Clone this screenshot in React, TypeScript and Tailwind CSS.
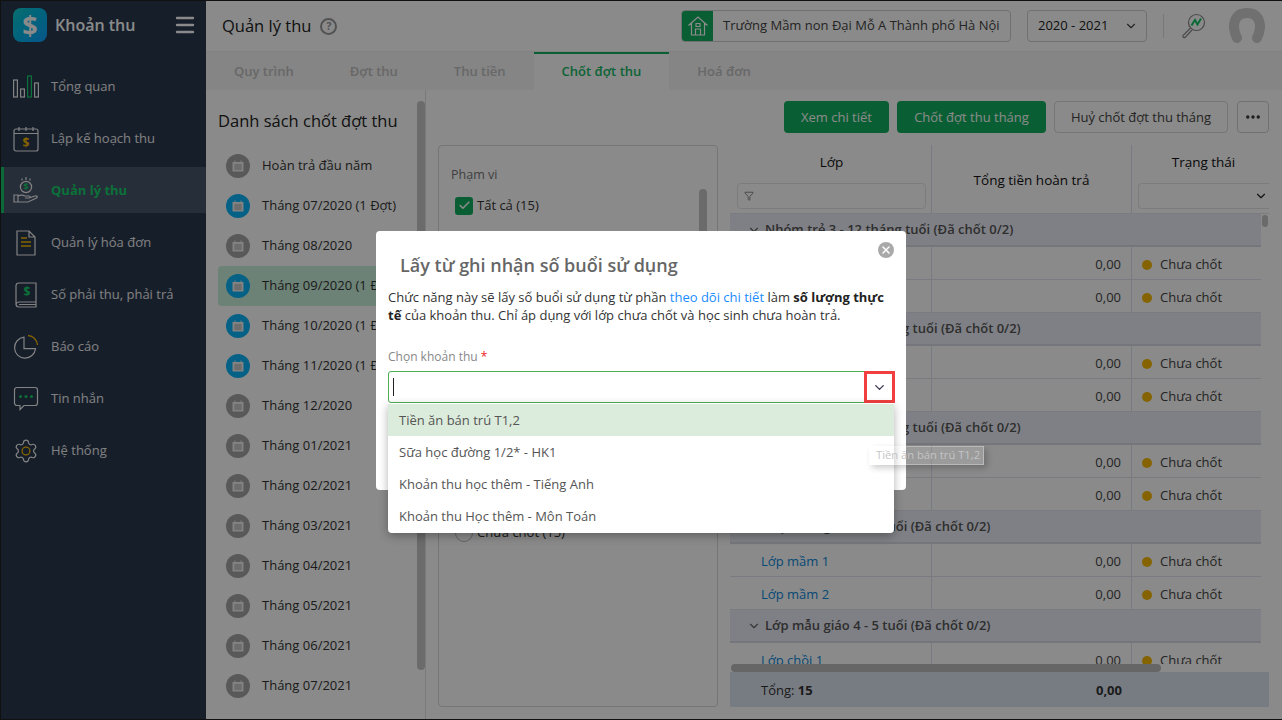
import * as React from 'react'
import { ChevronDown, Check, X, Menu, Ellipsis, Filter } from 'lucide-react'

const DollarText = ({ x, y, size, fill }: { x: number; y: number; size: number; fill: string }) => (
  <text x={x} y={y} fontSize={size} fontWeight={700} fontFamily="'Open Sans', sans-serif" textAnchor="middle" fill={fill}>
    $
  </text>
)

const stroke = { fill: 'none', stroke: '#f2f2f2', strokeWidth: 1.2 }

const IconChart = () => (
  <svg width="26" height="26" viewBox="0 0 26 26">
    <rect x="0.6" y="6" width="3.8" height="17" {...stroke} />
    <rect x="7.6" y="15" width="3.8" height="8" {...stroke} />
    <rect x="14.6" y="2" width="3.8" height="21" fill="none" stroke="#16d06a" strokeWidth="1.2" />
    <rect x="21.6" y="9" width="3.8" height="14" {...stroke} />
  </svg>
)

const IconPlan = () => (
  <svg width="26" height="26" viewBox="0 0 26 26">
    <rect x="1" y="3" width="24" height="22" rx="2" {...stroke} />
    <path d="M1 7.5h24M6 1v4M13 1v4M20 1v4" {...stroke} />
    <DollarText x={13} y={21} size={12} fill="#f5b800" />
  </svg>
)

const IconMoneyHand = () => (
  <svg width="26" height="28" viewBox="0 0 26 28">
    <path d="M13 0v3M9 1.500v2M17 1.500v2" {...stroke} />
    <circle cx="13" cy="10" r="5.600" {...stroke} />
    <DollarText x={13} y={13.400} size={9} fill="#16d06a" />
    <path d="M1 18h4v7H1zM5 19c3-1.500 5-1 7 0h4c1.500 0 1.500 2 0 2h-4M16 21l6-2c2-.5 3 1 1.500 2L15 25H5" {...stroke} />
  </svg>
)

const IconInvoice = () => (
  <svg width="26" height="26" viewBox="0 0 26 26">
    <path d="M4 1h12l6 6v18H4zM16 1v6h6" {...stroke} />
    <path d="M8 8h6M8 12h10M8 16h10" fill="none" stroke="#f5b800" strokeWidth="1.400" />
  </svg>
)

const IconBook = () => (
  <svg width="26" height="26" viewBox="0 0 26 26">
    <path d="M6 1h17v19H6c-3 0-3 2.500-3 2.500V4c0-2 1-3 3-3zM3 22c0 2 1 3 3 3h17v-2.500H6M23 20v2.500" {...stroke} />
    <DollarText x={14} y={14} size={12} fill="#16d06a" />
  </svg>
)

const IconPie = () => (
  <svg width="26" height="26" viewBox="0 0 26 26">
    <path d="M11 3.200a10.500 10.500 0 1 0 11.500 11.500H11z" {...stroke} />
    <path d="M15 1.500a10 10 0 0 1 9.500 9.500" fill="none" stroke="#f5b800" strokeWidth="1.300" />
  </svg>
)

const IconChat = () => (
  <svg width="26" height="26" viewBox="0 0 26 26">
    <path d="M4 1.500h18c1.500 0 2.500 1 2.500 2.500v13c0 1.500-1 2.500-2.500 2.500H11l-4 4v-4H4c-1.500 0-2.500-1-2.500-2.500V4c0-1.500 1-2.500 2.500-2.500z" {...stroke} />
    <circle cx="7.500" cy="10.500" r="1.500" fill="#16d06a" />
    <circle cx="13" cy="10.500" r="1.500" fill="#16d06a" />
    <circle cx="18.500" cy="10.500" r="1.500" fill="#16d06a" />
  </svg>
)

const IconGear = () => (
  <svg width="26" height="26" viewBox="0 0 24 24">
    <path
      d="M9.671 4.136a2.34 2.34 0 0 1 4.659 0 2.34 2.34 0 0 0 3.319 1.915 2.34 2.34 0 0 1 2.33 4.033 2.34 2.34 0 0 0 0 3.831 2.34 2.34 0 0 1-2.33 4.033 2.34 2.34 0 0 0-3.319 1.915 2.34 2.34 0 0 1-4.659 0 2.34 2.34 0 0 0-3.320-1.915 2.34 2.34 0 0 1-2.330-4.033 2.34 2.34 0 0 0 0-3.831A2.34 2.34 0 0 1 6.350 6.051a2.34 2.34 0 0 0 3.319-1.915"
      fill="none"
      stroke="#f2f2f2"
      strokeWidth="1.100"
    />
    <circle cx="12" cy="12" r="3.600" fill="none" stroke="#f5b800" strokeWidth="1.200" />
  </svg>
)

const navItems = [
  { label: 'Tổng quan', icon: <IconChart /> },
  { label: 'Lập kế hoạch thu', icon: <IconPlan /> },
  { label: 'Quản lý thu', icon: <IconMoneyHand />, active: true },
  { label: 'Quản lý hóa đơn', icon: <IconInvoice /> },
  { label: 'Số phải thu, phải trả', icon: <IconBook /> },
  { label: 'Báo cáo', icon: <IconPie /> },
  { label: 'Tin nhắn', icon: <IconChat /> },
  { label: 'Hệ thống', icon: <IconGear /> },
]

const Sidebar = () => (
  <aside className="flex w-[205px] shrink-0 flex-col bg-[#29384f]">
    <div className="flex h-[48px] items-center pl-3 pr-[9px]">
      <div className="flex h-[34px] w-[34px] items-center justify-center rounded-lg bg-gradient-to-br from-[#13cccc] to-[#139fff] text-[27px] font-bold text-white">
        $
      </div>
      <span className="ml-2 text-[16px] font-semibold text-white">Khoản thu</span>
      <Menu className="ml-auto text-white" size={24} strokeWidth={2.400} />
    </div>
    <nav className="mt-[14px] flex flex-col gap-[6px]">
      {navItems.map((item) => (
        <div
          key={item.label}
          className={
            item.active
              ? 'flex h-[46px] items-center border-l-[3px] border-[#16c567] bg-[#46556a] pl-[9px] pt-[2px]'
              : 'flex h-[46px] items-center pl-3 pt-[2px]'
          }
        >
          <span className="flex w-[26px] justify-center">{item.icon}</span>
          <span className={item.active ? 'ml-3 text-[13px] font-bold text-[#16d06a]' : 'ml-3 text-[13px] text-[#ededed]'}>
            {item.label}
          </span>
        </div>
      ))}
    </nav>
  </aside>
)

const Header = () => (
  <header className="flex h-[51px] shrink-0 items-center border-b border-[#eeeeee] bg-white pl-[16px] pr-[17px]">
    <h1 className="text-[16.500px] text-[#222]">Quản lý thu</h1>
    <span className="ml-[9px] flex h-[17px] w-[17px] items-center justify-center rounded-full border-2 border-[#999] text-[11px] font-bold text-[#999]">
      ?
    </span>
    <div className="ml-auto flex h-[32px] w-[330px] overflow-hidden rounded border border-[#d0d0d0]">
      <div className="flex w-[31px] items-center justify-center bg-[#12b05f]">
        <svg width="22" height="22" viewBox="0 0 22 22" fill="none" stroke="#ffffff" strokeWidth="1.200">
          <path d="M1.500 10.500 11 2l9.500 8.500M4.500 8.500V20h13V8.500M8.500 20v-6h5v6M9 8.500h4v3H9z" />
        </svg>
      </div>
      <div className="flex flex-1 items-center whitespace-nowrap pl-[10px] text-[13px] text-[#444]">
        Trường Mầm non Đại Mỗ A Thành phố Hà Nội
      </div>
    </div>
    <div className="ml-4 flex h-[32px] w-[120px] items-center justify-between rounded border border-[#d0d0d0] pl-[10px] pr-[8px] text-[13px] text-[#222]">
      2020 - 2021
      <ChevronDown size={14} strokeWidth={2} className="text-[#444]" />
    </div>
    <div className="ml-4 h-[24px] w-px bg-[#dddddd]" />
    <svg className="ml-4" width="26" height="26" viewBox="0 0 26 26" fill="none">
      <circle cx="16.500" cy="9.500" r="8" stroke="#8a8a8a" strokeWidth="1.200" />
      <path d="M10.500 15 3 22.500a1.500 1.500 0 0 0 2 2L12 17" stroke="#8a8a8a" strokeWidth="1.200" />
      <path d="M11.500 12.500 15 7l2.500 4.500L21 5.500" stroke="#16c567" strokeWidth="2" />
    </svg>
    <svg className="ml-[23px]" width="36" height="36" viewBox="0 0 36 36" fill="none">
      <path d="M8 30C2 18 5 5 18 5s16 13 10 25" stroke="#cfcfcf" strokeWidth="10" strokeLinecap="round" />
    </svg>
  </header>
)

const tabs = ['Quy trình', 'Đợt thu', 'Thu tiền', 'Chốt đợt thu', 'Hoá đơn']

const Tabs = () => (
  <div className="flex h-[38px] shrink-0 bg-[#f5f5f5] text-[13px] font-semibold">
    {tabs.map((tab) => (
      <div
        key={tab}
        className={
          tab === 'Chốt đợt thu'
            ? 'flex items-center border-t-2 border-[#12b05f] bg-white px-7 text-[#16b866]'
            : 'flex items-center px-7 pt-[2px] text-[#c0c0c0]'
        }
      >
        {tab}
      </div>
    ))}
  </div>
)

const periods = [
  { label: 'Hoàn trả đầu năm' },
  { label: 'Tháng 07/2020 (1 Đợt)', blue: true },
  { label: 'Tháng 08/2020' },
  { label: 'Tháng 09/2020 (1 Đợt)', blue: true, selected: true },
  { label: 'Tháng 10/2020 (1 Đợt)', blue: true },
  { label: 'Tháng 11/2020 (1 Đợt)', blue: true },
  { label: 'Tháng 12/2020' },
  { label: 'Tháng 01/2021' },
  { label: 'Tháng 02/2021' },
  { label: 'Tháng 03/2021' },
  { label: 'Tháng 04/2021' },
  { label: 'Tháng 05/2021' },
  { label: 'Tháng 06/2021' },
  { label: 'Tháng 07/2021' },
]

const MiniCalendar = () => (
  <svg width="12" height="12" viewBox="0 0 12 12" fill="#f0f0f0">
    <path d="M0.500 2h11v9.500H0.500zM2.500 0.500h1V2h-1zM8.500 0.500h1V2h-1z" />
    <path d="M2 5h8M2 7h8M2 9h8M4 4v6M6 4v6M8 4v6" stroke="#a5a5a5" strokeWidth="0.600" />
  </svg>
)

const PeriodList = () => (
  <div className="relative flex w-[220px] shrink-0 flex-col border-r border-[#e2e2e2] pl-3">
    <h2 className="mt-[20px] h-[22px] whitespace-nowrap text-[16.500px] font-normal leading-[22px] text-[#222]">Danh sách chốt đợt thu</h2>
    <div className="mt-[14px] flex flex-col">
      {periods.map((p) => (
        <div
          key={p.label}
          className={
            p.selected
              ? 'flex h-[40px] w-[197px] items-center gap-3 overflow-hidden whitespace-nowrap rounded bg-[#c8f0da] pl-2'
              : 'flex h-[40px] w-[197px] items-center gap-3 overflow-hidden whitespace-nowrap pl-2'
          }
        >
          <span
            className={
              p.blue
                ? 'flex h-[24px] w-[24px] shrink-0 items-center justify-center rounded-full bg-[#0bb4f5]'
                : 'flex h-[24px] w-[24px] shrink-0 items-center justify-center rounded-full bg-[#a5a5a5]'
            }
          >
            <MiniCalendar />
          </span>
          <span className="text-[13px] text-[#333]">{p.label}</span>
        </div>
      ))}
    </div>
    <div className="absolute right-0 top-[11px] h-[569px] w-[8px] rounded-sm bg-[#c6c6c6]" />
  </div>
)

const ScopePanel = () => (
  <div className="relative h-[562px] w-[280px] shrink-0 rounded border border-[#d8d8d8]">
    <div className="absolute left-[12px] top-[20px] text-[12.500px] text-[#777]">Phạm vi</div>
    <div className="absolute left-[16px] top-[50px] flex items-center gap-[4px]">
      <span className="flex h-[18px] w-[18px] items-center justify-center rounded-[3px] bg-[#12b05f]">
        <Check size={13} strokeWidth={3} className="text-white" />
      </span>
      <span className="text-[13px] text-[#333]">Tất cả (15)</span>
    </div>
    <div className="absolute left-[16px] top-[377px] flex items-center gap-[4px]">
      <span className="h-[18px] w-[18px] rounded-full border border-[#bbbbbb]" />
      <span className="text-[13px] text-[#333]">Chưa chốt (15)</span>
    </div>
    <div className="absolute right-[10px] top-[43px] h-[340px] w-[8px] rounded bg-[#c6c6c6]" />
  </div>
)

const groups = [
  { title: 'Nhóm trẻ 3 - 12 tháng tuổi (Đã chốt 0/2)', rows: ['Lớp nhóm 1', 'Lớp nhóm 2'] },
  { title: 'Nhóm trẻ 13 - 24 tháng tuổi (Đã chốt 0/2)', rows: ['Lớp nhóm 3', 'Lớp nhóm 4'] },
  { title: 'Nhóm trẻ 25 - 36 tháng tuổi (Đã chốt 0/2)', rows: ['Lớp nhóm 5', 'Lớp nhóm 6'] },
  { title: 'Lớp mẫu giáo 3 - 4 tuổi (Đã chốt 0/2)', rows: ['Lớp mầm 1', 'Lớp mầm 2'] },
  { title: 'Lớp mẫu giáo 4 - 5 tuổi (Đã chốt 0/2)', rows: ['Lớp chồi 1'] },
]

const ClassTable = () => (
  <div className="relative flex h-[562px] min-w-0 flex-1 flex-col overflow-hidden bg-white text-[13px]">
    <div className="flex h-[69px] shrink-0 border-b border-[#e4e6ee] bg-[#ffffff]">
      <div className="flex w-[202px] flex-col items-center border-r border-[#e0e2ea] pl-[7px] pr-[5px] pt-[8px]">
        <span className="text-[13.500px] font-medium leading-[18px] text-[#111]">Lớp</span>
        <div className="mt-[12px] flex h-[26px] w-full items-center rounded border border-[#e6e6e6] pl-[6px]">
          <Filter size={10} className="text-[#777]" />
        </div>
      </div>
      <div className="flex w-[200px] items-center justify-center border-r border-[#e0e2ea] pt-[3px] text-[13.500px] font-medium text-[#111]">
        Tổng tiền hoàn trả
      </div>
      <div className="flex min-w-0 flex-1 flex-col items-center pl-[6px] pt-[8px]">
        <span className="text-[13.500px] font-medium leading-[18px] text-[#111]">Trạng thái</span>
        <div className="mt-[12px] flex h-[26px] w-full items-center justify-end rounded-l border border-r-0 border-[#e6e6e6] pr-[1px]">
          <ChevronDown size={14} strokeWidth={2} className="text-[#222]" />
        </div>
      </div>
    </div>
    <div className="min-h-0 flex-1 overflow-hidden pr-[8px]">
      {groups.map((g) => (
        <div key={g.title}>
          <div className="flex h-[33px] items-center border-b-2 border-[#d8dbe6] bg-[#ebedf5] pl-[17px] font-semibold text-[#555]">
            <ChevronDown size={14} strokeWidth={2} className="mr-[4px] text-[#666]" />
            {g.title}
          </div>
          {g.rows.map((r) => (
            <div key={r} className="flex h-[33px] items-center border-b border-[#e2e4ec]">
              <div className="flex h-full w-[202px] items-center border-r border-[#e0e2ea] pl-[31px] pt-[3px] text-[#0c87d8]">{r}</div>
              <div className="flex h-full w-[200px] items-center justify-end border-r border-[#e0e2ea] pr-[10px] pt-[3px] text-[#444]">0,00</div>
              <div className="flex items-center pl-[10px] pt-[3px] text-[#444]">
                <span className="mr-[8px] h-[10px] w-[10px] rounded-full bg-[#f5b800]" />
                Chưa chốt
              </div>
            </div>
          ))}
        </div>
      ))}
    </div>
    <div className="h-[8px] shrink-0 bg-white pl-px">
      <div className="h-full w-[430px] rounded bg-[#bdbdbd]" />
    </div>
    <div className="absolute right-[1px] top-[70px] h-[12px] w-[6px] rounded bg-[#c6c6c6]" />
    <div className="flex h-[35px] shrink-0 items-center bg-[#dde5f2] pt-[2px] text-[#333]">
      <div className="w-[201px] pl-[31px]">
        Tổng: <b>15</b>
      </div>
      <div className="w-[191px] text-right font-bold">0,00</div>
    </div>
  </div>
)

const Toolbar = () => (
  <div className="flex h-[32px] items-stretch justify-end gap-2 text-[13px]">
    <button className="w-[105px] rounded bg-[#12b05f] pt-[2px] font-medium text-white">Xem chi tiết</button>
    <button className="w-[149px] rounded bg-[#12b05f] pt-[2px] font-medium text-white">Chốt đợt thu tháng</button>
    <button className="w-[174px] rounded border border-[#d8d8d8] pt-[2px] text-[#444]">Huỷ chốt đợt thu tháng</button>
    <button className="ml-[1px] flex w-[32px] items-center justify-center rounded border border-[#d0d0d0] text-[#333]">
      <Ellipsis size={18} strokeWidth={2.500} />
    </button>
  </div>
)

const options = ['Tiền ăn bán trú T1,2', 'Sữa học đường 1/2* - HK1', 'Khoản thu học thêm - Tiếng Anh', 'Khoản thu Học thêm - Môn Toán']

const Modal = () => (
  <div className="absolute left-[376px] top-[231px] h-[259px] w-[530px] rounded-sm bg-white px-3">
    <button className="absolute right-[12px] top-[11px] flex h-[16px] w-[16px] items-center justify-center rounded-full bg-[#a9a9a9]">
      <X size={12} strokeWidth={3} className="text-white" />
    </button>
    <h3 className="mt-[22px] h-[24px] pl-3 text-[18px] font-semibold leading-[24px] text-[#666]">Lấy từ ghi nhận số buổi sử dụng</h3>
    <p className="mt-[11px] whitespace-nowrap text-[13px] leading-[18px] text-[#333]">
      Chức năng này sẽ lấy số buổi sử dụng từ phần <span className="text-[#1a8cff]">theo dõi chi tiết</span> làm{' '}
      <b className="text-[#222]">số lượng thực</b>
      <br />
      <b className="text-[#222]">tế</b> của khoản thu. Chỉ áp dụng với lớp chưa chốt và học sinh chưa hoàn trả.
    </p>
    <div className="mt-[24px] h-[18px] text-[12px] leading-[18px] text-[#888]">
      Chọn khoản thu <span className="text-[#ee2222]">*</span>
    </div>
    <div className="relative mt-[5px] h-[32px] w-[506px] rounded-[3px] border border-[#4cb050]">
      <div className="absolute left-[4px] top-[6px] h-[18px] w-px bg-[#222]" />
      <div className="absolute -right-[2px] -top-px flex h-[32px] w-[31px] items-center justify-center border-[3px] border-[#f24040]">
        <ChevronDown size={15} strokeWidth={2.200} className="text-[#3a3a55]" />
      </div>
      <div className="absolute -left-px top-[31px] w-[506px] rounded-b bg-white pt-[1px] pb-px shadow-[0_3px_10px_rgba(0,0,0,0.3)]">
        {options.map((o, i) => (
          <div
            key={o}
            className={
              i === 0
                ? 'flex h-[32px] items-center bg-[#dcecdc] pl-[11px] pt-[1px] text-[13px] text-[#555]'
                : 'flex h-[32px] items-center pl-[11px] pt-[1px] text-[13px] text-[#555]'
            }
          >
            {o}
          </div>
        ))}
      </div>
    </div>
  </div>
)

export default function App() {
  return (
    <div className="relative h-[720px] w-[1282px] overflow-hidden font-['Open_Sans',sans-serif]">
      <div className="flex h-full w-full pl-px pt-px">
        <Sidebar />
        <main className="flex min-w-0 flex-1 flex-col bg-white">
          <Header />
          <Tabs />
          <div className="flex min-h-0 flex-1">
            <PeriodList />
            <div className="min-w-0 flex-1 pl-3 pr-[13px] pt-[11px]">
              <Toolbar />
              <div className="mt-3 flex gap-3">
                <ScopePanel />
                <ClassTable />
              </div>
            </div>
          </div>
        </main>
      </div>
      <div className="absolute inset-0 bg-black/46" />
      <Modal />
      <div className="absolute left-[869px] top-[446px] flex h-[19px] w-[115px] items-center whitespace-nowrap border border-white/30 bg-white/15 pl-[6px] text-[11.200px] text-[#c4c4c4] shadow-[3px_3px_6px_rgba(0,0,0,0.2)]">
        Tiền ăn bán trú T1,2
      </div>
      <div className="absolute inset-x-0 top-0 h-px bg-[#111]" />
      <div className="absolute inset-x-0 bottom-0 h-px bg-[#111]" />
      <div className="absolute inset-y-0 left-0 w-px bg-[#111]" />
    </div>
  )
}
